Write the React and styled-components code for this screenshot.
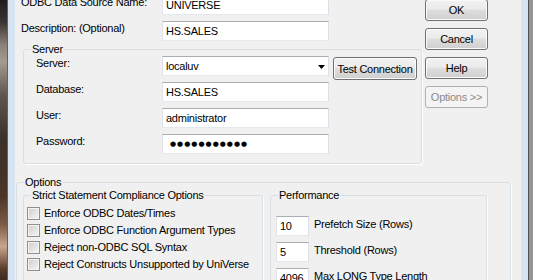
import React from 'react';
import styled, { createGlobalStyle } from 'styled-components';

const perfRows = [
  { value: '10', label: 'Prefetch Size (Rows)' },
  { value: '5', label: 'Threshold (Rows)' },
  { value: '4096', label: 'Max LONG Type Length' },
];

const strictRows = [
  'Enforce ODBC Dates/Times',
  'Enforce ODBC Function Argument Types',
  'Reject non-ODBC SQL Syntax',
  'Reject Constructs Unsupported by UniVerse',
];

export default function App() {
  return (
    <>
      <GlobalStyle />
      <Screen>
        <Photo />
        <Frame $side='left' />
        <Dialog>
          <TopSection>
            <FormColumn>
              <Rows $indent={6}>
                <Row>
                  <Label $width={141}>ODBC Data Source Name:</Label>
                  <Field>UNIVERSE</Field>
                </Row>
                <Row>
                  <Label $width={141}>Description: (Optional)</Label>
                  <Field>HS.SALES</Field>
                </Row>
              </Rows>
              <ServerGroup>
                <Legend>Server</Legend>
                <Row>
                  <Label $width={126}>Server:</Label>
                  <Field>
                    localuv
                    <Arrow width='7' height='4' viewBox='0 0 7 4'>
                      <path d='M0 0h7L3.5 4z' fill='#000' />
                    </Arrow>
                  </Field>
                  <Button $w={84} $h={23} $ml={4} $mt={1}>
                    Test Connection
                  </Button>
                </Row>
                <Row>
                  <Label $width={126}>Database:</Label>
                  <Field>HS.SALES</Field>
                </Row>
                <Row>
                  <Label $width={126}>User:</Label>
                  <Field>administrator</Field>
                </Row>
                <Row>
                  <Label $width={126}>Password:</Label>
                  <Field>
                    <Dots>●●●●●●●●●●●</Dots>
                  </Field>
                </Row>
              </ServerGroup>
            </FormColumn>
            <ButtonColumn>
              <Button $w={63}>OK</Button>
              <Button $w={63}>Cancel</Button>
              <Button $w={63}>Help</Button>
              <Button $w={63} disabled>
                Options &gt;&gt;
              </Button>
            </ButtonColumn>
          </TopSection>
          <OptionsGroup>
            <Legend>Options</Legend>
            <StrictGroup>
              <Legend>Strict Statement Compliance Options</Legend>
              {strictRows.map(text => (
                <CheckRow key={text}>
                  <CheckBox />
                  <span>{text}</span>
                </CheckRow>
              ))}
            </StrictGroup>
            <PerfGroup>
              <Legend>Performance</Legend>
              {perfRows.map(row => (
                <PerfRow key={row.label}>
                  <SmallField>{row.value}</SmallField>
                  <PerfLabel>{row.label}</PerfLabel>
                </PerfRow>
              ))}
            </PerfGroup>
          </OptionsGroup>
        </Dialog>
        <Frame $side='right' />
        <Backdrop />
      </Screen>
    </>
  );
}

const GlobalStyle = createGlobalStyle`
  html, body {
    margin: 0;
    padding: 0;
  }
  body {
    background: #9a9292;
    font-family: "Liberation Sans", Arial, sans-serif;
    font-size: 11px;
    letter-spacing: -0.25px;
    color: #000;
  }
`;

const Screen = styled.div`
  display: flex;
  width: 533px;
  height: 280px;
  overflow: hidden;
`;

const Photo = styled.div`
  width: 7px;
  flex: none;
  background: linear-gradient(
    #1e1c1b 0%,
    #3a3532 8%,
    #8c8078 16%,
    #a59a90 22%,
    #5f5650 34%,
    #3b302a 50%,
    #4a3426 70%,
    #7b5a44 80%,
    #c7a68c 88%,
    #5a3b2a 96%,
    #3e2a20 100%
  );
`;

const Frame = styled.div`
  width: 7px;
  flex: none;
  background: #d7e4f2;
  border-left: ${p => (p.$side === 'left' ? '1px solid #5d636b' : 'none')};
  border-right: ${p => (p.$side === 'right' ? '1px solid #4e5359' : 'none')};
`;

const Backdrop = styled.div`
  flex: 1;
  background: #9b9393;
`;

const Dialog = styled.div`
  width: 506px;
  flex: none;
  background: #f0f0f0;
  display: flex;
  flex-direction: column;
`;

const TopSection = styled.div`
  display: flex;
  align-items: flex-start;
  margin-top: -5px;
`;

const FormColumn = styled.div`
  width: 407px;
  display: flex;
  flex-direction: column;
`;

const Rows = styled.div`
  display: flex;
  flex-direction: column;
  gap: 6px;
  padding-left: ${p => p.$indent}px;
`;

const Row = styled.div`
  display: flex;
  align-items: flex-start;
  height: 20px;
`;

const Label = styled.span`
  width: ${p => p.$width}px;
  flex: none;
  padding-top: 1px;
  line-height: 13px;
  white-space: nowrap;
`;

const Field = styled.div`
  position: relative;
  width: 167px;
  height: 20px;
  box-sizing: border-box;
  flex: none;
  padding: 0 3px;
  background: #fff;
  border: 1px solid;
  border-color: #abadb3 #dbdfe6 #e3e9ef #e2e3ea;
  line-height: 18px;
  white-space: nowrap;
`;

const SmallField = styled(Field)`
  width: 33px;
`;

const Arrow = styled.svg`
  position: absolute;
  right: 3px;
  top: 8px;
`;

const Dots = styled.span`
  margin-left: 4px;
  font-family: "DejaVu Sans", sans-serif;
  font-size: 7px;
  letter-spacing: 1px;
  vertical-align: top;
  line-height: 18px;
  color: #000;
`;

const Group = styled.div`
  position: relative;
  box-sizing: border-box;
  border: 1px solid #d5dfe5;
  border-radius: 3px;
  box-shadow: 1px 1px 0 #fff;
`;

const Legend = styled.span`
  position: absolute;
  top: -7px;
  left: 7px;
  padding: 0 1px;
  background: #f0f0f0;
  line-height: 13px;
  white-space: nowrap;
`;

const ServerGroup = styled(Group)`
  width: 399px;
  margin: 8px 0 0 8px;
  padding: 6px 0 9px 12px;
  display: flex;
  flex-direction: column;
  gap: 6px;
`;

const ButtonColumn = styled.div`
  width: 63px;
  margin: 4px 0 0 3px;
  display: flex;
  flex-direction: column;
  gap: 7px;
`;

const Button = styled.button`
  width: ${p => p.$w}px;
  height: ${p => p.$h || 22}px;
  margin: ${p => p.$mt || 0}px 0 0 ${p => p.$ml || 0}px;
  box-sizing: border-box;
  flex: none;
  padding: 0;
  font: inherit;
  letter-spacing: inherit;
  color: #000;
  white-space: nowrap;
  border: 1px solid #707070;
  border-radius: 3px;
  background: linear-gradient(#f2f2f2, #ebebeb 45%, #dddddd 52%, #cfcfcf);
  box-shadow: inset 0 0 0 1px #fbfbfb;

  &:disabled {
    color: #8a8a8a;
    border-color: #adb2b5;
    background: #f4f4f4;
    box-shadow: none;
  }
`;

const OptionsGroup = styled(Group)`
  width: 495px;
  height: 140px;
  margin: 18px 0 0 1px;
  padding: 12px 0 0 6px;
  display: flex;
  align-items: flex-start;
  gap: 7px;
`;

const StrictGroup = styled(Group)`
  width: 240px;
  height: 120px;
  padding: 11px 0 0 3px;
  display: flex;
  flex-direction: column;
  gap: 4px;
`;

const CheckRow = styled.div`
  display: flex;
  align-items: flex-start;
  gap: 4px;
  line-height: 13px;
  white-space: nowrap;
`;

const CheckBox = styled.span`
  width: 13px;
  height: 13px;
  box-sizing: border-box;
  flex: none;
  border: 1px solid #8e8f8f;
  box-shadow: inset 0 0 0 1px #f4f4f4;
  background: linear-gradient(135deg, #cdcdcd, #f6f6f6);
`;

const PerfGroup = styled(Group)`
  width: 217px;
  height: 120px;
  padding: 20px 0 0 5px;
  display: flex;
  flex-direction: column;
  gap: 6px;
`;

const PerfRow = styled.div`
  display: flex;
  align-items: flex-start;
  gap: 5px;
`;

const PerfLabel = styled.span`
  padding-top: 2px;
  line-height: 13px;
  white-space: nowrap;
`;
